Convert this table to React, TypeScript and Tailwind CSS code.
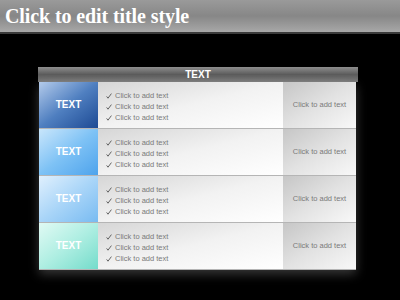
import React from "react";

const rows = [
  { cls: "bg-gradient-to-br from-[#b4cbea] via-[#4f7fc0] to-[#1d4a94]" },
  { cls: "bg-gradient-to-br from-[#c9e6fb] via-[#7ec2f5] to-[#4da3ec]" },
  { cls: "bg-gradient-to-br from-[#e0f0fd] via-[#a9d5f8] to-[#78bbf1]" },
  { cls: "bg-gradient-to-br from-[#e0faf4] via-[#aeeee2] to-[#72dccb]" },
];

const Check = () => (
  <svg width="6" height="6" viewBox="0 0 6 6" className="shrink-0">
    <path d="M0.6 3.4 L2 5.2 L5.4 0.6" fill="none" stroke="#555" strokeWidth="0.9" />
  </svg>
);

export default function App() {
  return (
    <div className="w-[400px] h-[300px] bg-black overflow-hidden flex flex-col font-['Liberation_Sans',Arial,sans-serif]">
      {/* Title */}
      <div className="h-[34px] shrink-0 bg-gradient-to-b from-[#9a9a9a] via-[#878787] to-[#a8a8a8] border-b-2 border-[#3a3a3a] flex items-center px-[5px]">
        <span className="font-['Liberation_Serif',serif] font-bold text-[20px] text-white leading-none tracking-[-0.1px]">
          Click to edit title style
        </span>
      </div>

      <div className="pt-[33px] pl-[38px]">
        {/* Header */}
        <div className="w-[320px] h-[15px] bg-gradient-to-b from-[#8e8e8e] via-[#5c5c5c] to-[#7a7a7a] flex items-center justify-center">
          <span className="text-white font-bold text-[10px] leading-none">TEXT</span>
        </div>

        <div className="ml-[1px] w-[317px] flex flex-col shadow-[0_4px_10px_rgba(160,160,160,0.35)]">
          {rows.map((r, i) => (
            <div key={i} className="h-[47px] flex border-b border-[#b5b5b5]">
              <div className={`w-[59px] ${r.cls} flex items-center justify-center`}>
                <span className="text-white font-bold text-[10px] leading-none">TEXT</span>
              </div>
              <div className="w-[185px] bg-gradient-to-br from-[#d6d6d6] via-[#f2f2f2] to-[#ffffff] flex flex-col justify-center gap-[2.5px] pl-[8px] pt-[4px]">
                {[0, 1, 2].map((k) => (
                  <div key={k} className="flex items-center gap-[3px] h-[8.5px]">
                    <Check />
                    <span className="text-[7.5px] text-[#7a7a7a] leading-none">Click to add text</span>
                  </div>
                ))}
              </div>
              <div className="flex-1 bg-gradient-to-br from-[#c6c6c6] via-[#e2e2e2] to-[#f8f8f8] flex items-center justify-center">
                <span className="text-[7.5px] text-[#7a7a7a] leading-none">Click to add text</span>
              </div>
            </div>
          ))}
        </div>
      </div>
    </div>
  );
}
